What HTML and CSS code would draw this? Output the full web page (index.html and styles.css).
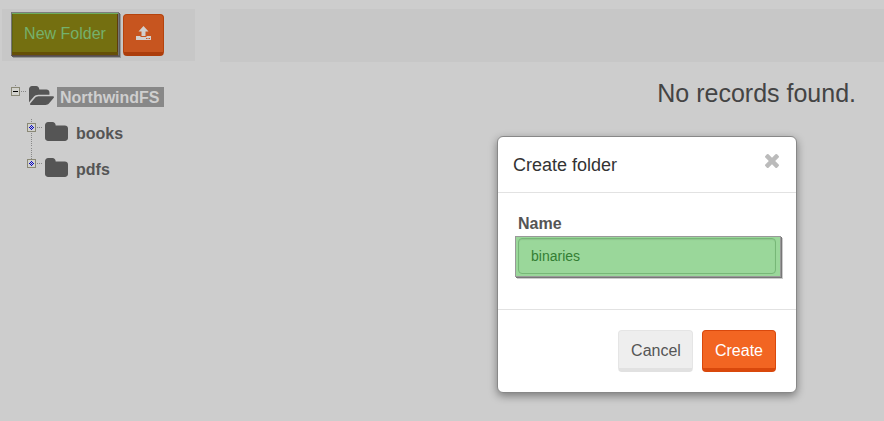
FILE: index.html
```html
<!DOCTYPE html>
<html lang="en">
<head>
<meta charset="utf-8">
<title>NorthwindFS</title>
<link rel="stylesheet" href="styles.css">
</head>
<body>
<div class="page">
  <aside class="sidebar">
    <div class="toolbar">
      <button class="btn new-folder">New Folder</button>
      <button class="btn upload" aria-label="Upload">
        <svg width="15" height="14" viewBox="0 0 15 14"><path fill="#d2cfcd" d="M7.500 0 12.500 5.500H9.500V10h-4V5.500H2.500zM0 10h4.500v1h6v-1H15v4H0z"/><path fill="#c7551f" d="M10 12h1.500v1H10zM12.500 12H14v1h-1.500z"/></svg>
      </button>
    </div>
    <ul class="tree">
      <li class="node root">
        <svg class="toggle" width="16" height="12" viewBox="0 0 16 12"><path d="M4.5 0v1" stroke="#888"/><rect x=".5" y="2.5" width="8" height="8" fill="#d2d2cd" stroke="#8a8876"/><path d="M2 6.5h5" stroke="#000"/><path d="M10 6.5h6" stroke="#888" stroke-dasharray="1 1"/></svg>
        <svg class="open-icon" width="25" height="19" viewBox="0 128 1879 1408" preserveAspectRatio="none"><path fill="#555" d="M1879 952q0 31-31 66l-336 396q-43 51-120.500 86.500t-143.500 35.500h-1088q-34 0-60.500-13t-26.500-43q0-31 31-66l336-396q43-51 120.500-86.500t143.500-35.500h1088q34 0 60.500 13t26.500 43zm-343-344v160h-832q-94 0-197 47.500t-164 119.500l-337 396-5 6q0-4-.5-12.500t-.5-12.500v-960q0-92 66-158t158-66h320q92 0 158 66t66 158v32h544q92 0 158 66t66 158z"/></svg>
        <span class="label selected">NorthwindFS</span>
      </li>
      <li class="node child">
        <svg class="toggle" width="16" height="36" viewBox="0 0 16 36"><path d="M4.500 7v27" stroke="#888" stroke-dasharray="1 1"/><rect x=".5" y="11.500" width="8" height="8" fill="#d2d2cd" stroke="#8a8876"/><path d="M4 13h1v1H4zM3 14h1v1H3zM5 14h1v1H5zM2 15h1v1H2zM4 15h1v1H4zM6 15h1v1H6zM3 16h1v1H3zM5 16h1v1H5zM4 17h1v1H4z" fill="#0000c8"/><path d="M10 15.500h6" stroke="#888" stroke-dasharray="1 1"/></svg>
        <svg class="folder-icon" width="23" height="19" viewBox="0 128 1664 1408" preserveAspectRatio="none"><path fill="#555" d="M1664 608v704q0 92-66 158t-158 66h-1216q-92 0-158-66t-66-158v-960q0-92 66-158t158-66h320q92 0 158 66t66 158v32h672q92 0 158 66t66 158z"/></svg>
        <span class="label">books</span>
      </li>
      <li class="node child">
        <svg class="toggle" width="16" height="36" viewBox="0 0 16 36"><path d="M4.500 0v11" stroke="#888" stroke-dasharray="1 1"/><rect x=".5" y="11.500" width="8" height="8" fill="#d2d2cd" stroke="#8a8876"/><path d="M4 13h1v1H4zM3 14h1v1H3zM5 14h1v1H5zM2 15h1v1H2zM4 15h1v1H4zM6 15h1v1H6zM3 16h1v1H3zM5 16h1v1H5zM4 17h1v1H4z" fill="#0000c8"/><path d="M10 15.500h6" stroke="#888" stroke-dasharray="1 1"/></svg>
        <svg class="folder-icon" width="23" height="19" viewBox="0 128 1664 1408" preserveAspectRatio="none"><path fill="#555" d="M1664 608v704q0 92-66 158t-158 66h-1216q-92 0-158-66t-66-158v-960q0-92 66-158t158-66h320q92 0 158 66t66 158v32h672q92 0 158 66t66 158z"/></svg>
        <span class="label">pdfs</span>
      </li>
    </ul>
  </aside>
  <main class="content">
    <div class="bar"></div>
    <p class="empty">No records found.</p>
  </main>
</div>
<div class="modal" role="dialog">
  <header class="modal-header">
    <h1>Create folder</h1>
    <svg class="close" width="14" height="14" viewBox="302 366 1188 1188"><path fill="#bbb" d="M1490 1322q0 40-28 68l-136 136q-28 28-68 28t-68-28l-294-294-294 294q-28 28-68 28t-68-28l-136-136q-28-28-28-68t28-68l294-294-294-294q-28-28-28-68t28-68l136-136q28-28 68-28t68 28l294 294 294-294q28-28 68-28t68 28l136 136q28 28 28 68t-28 68l-294 294 294 294q28 28 28 68z"/></svg>
  </header>
  <div class="modal-body">
    <label for="name">Name</label>
    <div class="highlight"><input id="name" type="text" value="binaries"></div>
  </div>
  <footer class="modal-footer">
    <button class="btn cancel">Cancel</button>
    <button class="btn create">Create</button>
  </footer>
</div>
</body>
</html>
```
FILE: styles.css
```css
* { box-sizing: border-box; }
body {
  margin: 0;
  height: 421px;
  overflow: hidden;
  background: #cdcdcd;
  color: #555;
  font: 16px "Liberation Sans", Arial, sans-serif;
}
.page { display: flex; gap: 25px; padding: 9px 0 0 2px; }
.sidebar { width: 193px; }
.toolbar {
  display: flex;
  gap: 4px;
  height: 52px;
  padding: 3px 0 0 9px;
  background: #c7c7c7;
}
.btn {
  height: 42px;
  padding: 2px 0 0;
  border: 1px solid;
  border-bottom-width: 4px;
  border-radius: 4px;
  font: 16px "Liberation Sans", Arial, sans-serif;
}
.new-folder {
  width: 108px;
  height: 44px;
  padding: 0 0 1px;
  border: 1px solid #747474;
  border-top-color: #7d7d7d;
  border-bottom-color: #5c4a45;
  border-radius: 0;
  background: #746f10;
  color: #74b16c;
  box-shadow: inset 0 1px #6dae60, inset 0 -3px #655007, inset 1px 0 #5e6512, inset -1px 0 #5e3c0c, 1px 1px #5c5c5c, 2px 2px #999;
}
.upload {
  display: flex;
  align-items: center;
  justify-content: center;
  width: 41px;
  margin-top: 2px;
  padding: 0 0 2px;
  background: #c7551f;
  border-color: #b5430d;
  border-bottom-color: #ac3d0b;
}
.tree { margin: 0; padding: 18px 0 0 9px; list-style: none; }
.node { display: flex; align-items: flex-start; height: 36px; }
.root { height: 33px; }
.root .toggle { margin-top: 6px; }
.child { padding-left: 16px; }
.open-icon { margin: 7px 0 0 2px; }
.folder-icon { margin: 10px 0 0 2px; }
.label { margin: 12px 0 0 5px; padding: 1px 3px; line-height: 18px; font-weight: bold; }
.label.selected { width: 107px; height: 20px; margin: 8px 0 0 3px; padding-top: 2px; background: #888; color: #cfcfcf; }
.content { flex: 1; }
.bar { height: 53px; background: #c7c7c7; }
.empty { margin: 16px 28px 0 0; text-align: right; font-size: 25px; line-height: 30px; color: #444; }
.modal {
  position: absolute;
  left: 497px;
  top: 136px;
  width: 300px;
  height: 257px;
  border: 1px solid #888;
  border-radius: 6px;
  background: #fff;
  box-shadow: 0 3px 9px rgba(0, 0, 0, .4);
}
.modal-header {
  display: flex;
  justify-content: space-between;
  height: 56px;
  padding: 17px 17px 0 15px;
  border-bottom: 1px solid #e2e2e2;
}
.modal-header h1 { margin: 0; color: #333; font-size: 18px; font-weight: normal; line-height: 22px; }
.modal-body { height: 116px; padding: 20px 14px 0 17px; }
.modal-body label { display: block; padding-left: 3px; font-weight: bold; line-height: 22px; }
.highlight {
  width: 266px;
  height: 41px;
  margin-top: 1px;
  padding: 1px 4px 2px 2px;
  border: 1px solid #999;
  background: #9ad79a;
  box-shadow: 1px 1px #777, 2px 2px #ccc;
}
.highlight input {
  display: block;
  width: 100%;
  height: 36px;
  padding: 0 12px;
  border: 1px solid #77b777;
  border-radius: 4px;
  background: #9ad79a;
  color: #347e34;
  font: 14px "Liberation Sans", Arial, sans-serif;
  box-shadow: inset 0 1px 1px rgba(0, 0, 0, .08);
}
.modal-footer {
  display: flex;
  justify-content: flex-end;
  gap: 9px;
  padding: 20px 20px 0 0;
  border-top: 1px solid #e2e2e2;
}
.cancel { width: 75px; padding-left: 1px; background: #eee; border-color: #e5e5e5; border-bottom-color: #e1e1e1; color: #555; }
.create { width: 74px; background: #f26522; border-color: #d9480c; color: #fff; }
```
